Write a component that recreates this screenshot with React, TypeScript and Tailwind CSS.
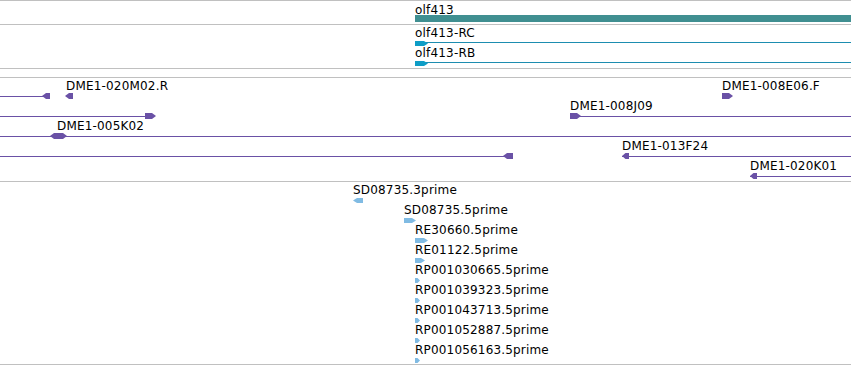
type Dir = "l" | "r" | "o";

type Feat = {
  label?: string;
  labelX?: number;
  line?: [number, number];
  glyph?: { x: number; w: number; dir: Dir };
};

// strand marker, drawn like the browser's canvas glyphs
function Glyph({ w, h, dir, color }: { w: number; h: number; dir: Dir; color: string }) {
  const t = Math.min(4, w / 2);
  let pts = "";
  if (dir === "r") pts = `0,0 ${w - t},0 ${w},${h / 2} ${w - t},${h} 0,${h}`;
  else if (dir === "l") pts = `${t},0 ${w},0 ${w},${h} ${t},${h} 0,${h / 2}`;
  else pts = `${t},0 ${w - t},0 ${w},${h / 2} ${w - t},${h} ${t},${h} 0,${h / 2}`;
  return (
    <svg width={w} height={h} className="block">
      <polygon points={pts} fill={color} />
    </svg>
  );
}

function Row({
  feats,
  lineColor,
  glyphColor,
  glyphH,
  lineTop,
}: {
  feats: Feat[];
  lineColor: string;
  glyphColor: string;
  glyphH: number;
  lineTop: number;
}) {
  return (
    <div className="relative h-[20px] shrink-0">
      {feats.map((f, i) => (
        <div key={i}>
          {f.line && (
            <div
              className="absolute h-px"
              style={{ left: f.line[0], width: f.line[1] - f.line[0], top: lineTop, background: lineColor }}
            />
          )}
          {f.glyph && (
            <div className="absolute" style={{ left: f.glyph.x, top: 18 - Math.floor(glyphH / 2) }}>
              <Glyph w={f.glyph.w} h={glyphH} dir={f.glyph.dir} color={glyphColor} />
            </div>
          )}
          {f.label && (
            <div className="absolute top-[2px] whitespace-nowrap text-black" style={{ left: f.labelX }}>
              {f.label}
            </div>
          )}
        </div>
      ))}
    </div>
  );
}

const transcripts: Feat[][] = [
  [{ label: "olf413-RC", labelX: 415, line: [415, 851], glyph: { x: 415, w: 13, dir: "r" } }],
  [{ label: "olf413-RB", labelX: 415, line: [415, 851], glyph: { x: 415, w: 13, dir: "r" } }],
];

const bacs: Feat[][] = [
  [
    { line: [0, 46], glyph: { x: 42, w: 8, dir: "l" } },
    { label: "DME1-020M02.R", labelX: 66, glyph: { x: 65, w: 8, dir: "l" } },
    { label: "DME1-008E06.F", labelX: 722, glyph: { x: 722, w: 11, dir: "r" } },
  ],
  [
    { line: [0, 150], glyph: { x: 145, w: 11, dir: "r" } },
    { label: "DME1-008J09", labelX: 570, line: [570, 851], glyph: { x: 570, w: 11, dir: "r" } },
  ],
  [{ label: "DME1-005K02", labelX: 57, line: [0, 851], glyph: { x: 50, w: 17, dir: "o" } }],
  [
    { line: [0, 508], glyph: { x: 503, w: 10, dir: "l" } },
    { label: "DME1-013F24", labelX: 622, line: [622, 851], glyph: { x: 622, w: 7, dir: "l" } },
  ],
  [{ label: "DME1-020K01", labelX: 750, line: [750, 851], glyph: { x: 750, w: 7, dir: "l" } }],
];

const ests: Feat[][] = [
  [{ label: "SD08735.3prime", labelX: 353, glyph: { x: 353, w: 10, dir: "l" } }],
  [{ label: "SD08735.5prime", labelX: 404, glyph: { x: 404, w: 12, dir: "r" } }],
  [{ label: "RE30660.5prime", labelX: 415, glyph: { x: 415, w: 13, dir: "r" } }],
  [{ label: "RE01122.5prime", labelX: 415, glyph: { x: 415, w: 10, dir: "r" } }],
  [{ label: "RP001030665.5prime", labelX: 415, glyph: { x: 415, w: 5, dir: "r" } }],
  [{ label: "RP001039323.5prime", labelX: 415, glyph: { x: 415, w: 5, dir: "r" } }],
  [{ label: "RP001043713.5prime", labelX: 415, glyph: { x: 415, w: 5, dir: "r" } }],
  [{ label: "RP001052887.5prime", labelX: 415, glyph: { x: 415, w: 5, dir: "r" } }],
  [{ label: "RP001056163.5prime", labelX: 415, glyph: { x: 415, w: 5, dir: "r" } }],
];

export default function App() {
  return (
    <div
      className="w-full h-[365px] bg-white overflow-hidden text-[12px] leading-[12px] tracking-[0.18px]"
      style={{ fontFamily: '"DejaVu Sans", "Liberation Sans", sans-serif' }}
    >
      <div className="flex flex-col border-t border-[#c0c0c0]">
        {/* gene */}
        <div className="flex flex-col h-[24px] pl-[415px] pt-[3px] border-b border-[#c0c0c0]">
          <div className="text-black">olf413</div>
          <div className="mt-[-1px] h-[7px] bg-[#408f91]" />
        </div>

        {/* transcripts */}
        <div className="flex flex-col h-[44px] border-b border-[#c0c0c0]">
          {transcripts.map((r, i) => (
            <Row key={i} feats={r} lineColor="#1d8db0" glyphColor="#0e9dc6" glyphH={5} lineTop={17} />
          ))}
        </div>

        {/* empty track */}
        <div className="h-[9px] border-b border-[#c0c0c0]" />

        {/* BAC ends */}
        <div className="flex flex-col h-[104px] border-b border-[#c0c0c0]">
          {bacs.map((r, i) => (
            <Row key={i} feats={r} lineColor="#6a51a6" glyphColor="#6a51a6" glyphH={6} lineTop={18} />
          ))}
        </div>

        {/* ESTs */}
        <div className="flex flex-col h-[183px] border-b border-[#c0c0c0]">
          {ests.map((r, i) => (
            <Row key={i} feats={r} lineColor="#80bbe3" glyphColor="#80bbe3" glyphH={5} lineTop={18} />
          ))}
        </div>
      </div>
    </div>
  );
}
